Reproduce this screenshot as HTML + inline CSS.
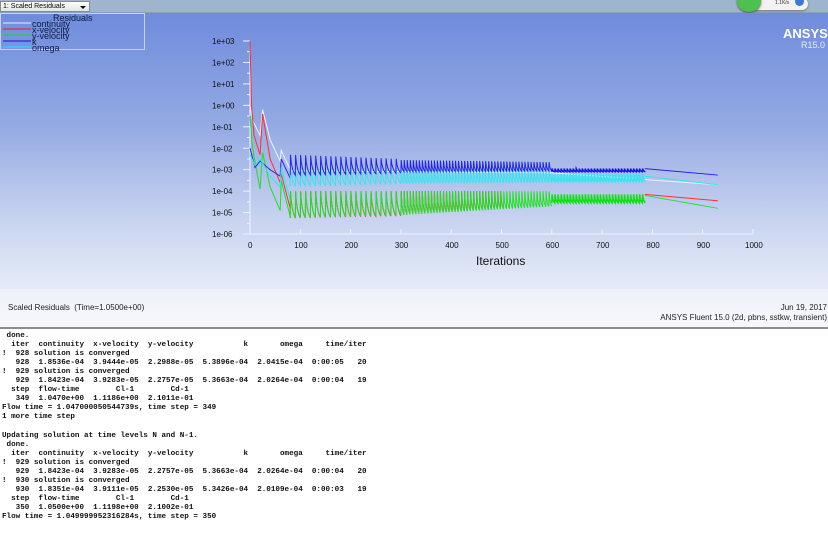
<!DOCTYPE html>
<html><head><meta charset="utf-8"><style>
*{margin:0;padding:0;box-sizing:border-box}
body{width:828px;height:535px;overflow:hidden;background:#fff;font-family:"Liberation Sans",sans-serif;position:relative}
#top{position:absolute;left:0;top:0;width:828px;height:13px;background:#9fb5cd;border-bottom:1px solid #8aa0bb}
#dd{position:absolute;left:0;top:1px;width:90px;height:11px;background:linear-gradient(#fdfdfd,#e4e4e4);border:1px solid #8a8a8a;font-size:7px;line-height:9px;padding-left:2px;color:#000}
#dd:after{content:"";position:absolute;right:3px;top:4px;border:3px solid transparent;border-top:3px solid #000}
#plot{position:absolute;left:0;top:13px;width:828px;height:276px;background:linear-gradient(#6f8cdc 0%,#93a9e3 40%,#c8d3f0 75%,#e6ebf8 100%)}
#foot{position:absolute;left:0;top:289px;width:828px;height:38px;background:linear-gradient(#eef1fa,#f6f8fc)}
#sep{position:absolute;left:0;top:327px;width:828px;height:2px;background:#8c8c8c}
#con{position:absolute;left:2px;top:331.5px;font-family:"Liberation Mono",monospace;font-weight:bold;font-size:7.6px;line-height:9.1px;white-space:pre;color:#111}
.ft{position:absolute;font-size:8px;color:#222}
</style></head><body>
<div id="top"><div id="dd">1: Scaled Residuals</div>
<div style="position:absolute;left:742px;top:-2px;width:66px;height:12px;background:#f2f2f2;border-radius:6px;box-shadow:0 1px 2px #777"></div>
<div style="position:absolute;left:737px;top:-10px;width:24px;height:22px;border-radius:50%;background:#4cc152;box-shadow:0 1px 2px #555"></div>
<div style="position:absolute;left:775px;top:0;font-size:5px;color:#333">1.1K/s</div>
<div style="position:absolute;left:795px;top:-3px;width:9px;height:9px;border-radius:50%;background:#3c78d8"></div>
</div>
<div id="plot"></div>
<svg id="svg" width="828" height="289" style="position:absolute;left:0;top:0" font-family="Liberation Sans, sans-serif">
<rect x="0.5" y="13.5" width="144" height="36" fill="none" stroke="#c8d2ee"/>
<text x="53" y="21" font-size="9" fill="#0c1a40">Residuals</text>
<g font-size="9" fill="#0c1a40">
<line x1="3" x2="31" y1="23" y2="23" stroke="#e8eef8"/><text x="32" y="27">continuity</text>
<line x1="3" x2="31" y1="29" y2="29" stroke="#e02020"/><text x="32" y="33">x-velocity</text>
<line x1="3" x2="31" y1="35" y2="35" stroke="#20d020"/><text x="32" y="39">y-velocity</text>
<line x1="3" x2="31" y1="41" y2="41" stroke="#1010e0"/><text x="32" y="45">k</text>
<line x1="3" x2="31" y1="47" y2="47" stroke="#20e0f0"/><text x="32" y="51">omega</text>
</g>
<text x="783" y="38" font-size="13" font-weight="bold" fill="#fff">ANSYS</text>
<text x="801" y="48" font-size="9" fill="#e8eefa">R15.0</text>
<g id="axes" stroke="#eef2ff" fill="none"></g>
<g id="lbl" font-size="8" fill="#111"></g>
<g id="curves" fill="none" stroke-width="1"></g>
<text x="476" y="265" font-size="12" fill="#111">Iterations</text>
</svg>
<div id="foot"></div>
<div class="ft" style="left:8px;top:303px">Scaled Residuals&nbsp; (Time=1.0500e+00)</div>
<div class="ft" style="right:1px;top:303px">Jun 19, 2017</div>
<div class="ft" style="right:1px;top:313px">ANSYS Fluent 15.0 (2d, pbns, sstkw, transient)</div>
<div id="sep"></div>
<div id="con"> done.
  iter  continuity  x-velocity  y-velocity           k       omega     time/iter
!  928 solution is converged
   928  1.8536e-04  3.9444e-05  2.2988e-05  5.3896e-04  2.0415e-04  0:00:05   20
!  929 solution is converged
   929  1.8423e-04  3.9283e-05  2.2757e-05  5.3663e-04  2.0264e-04  0:00:04   19
  step  flow-time        Cl-1        Cd-1
   349  1.0470e+00  1.1186e+00  2.1011e-01
Flow time = 1.047000050544739s, time step = 349
1 more time step

Updating solution at time levels N and N-1.
 done.
  iter  continuity  x-velocity  y-velocity           k       omega     time/iter
!  929 solution is converged
   929  1.8423e-04  3.9283e-05  2.2757e-05  5.3663e-04  2.0264e-04  0:00:04   20
!  930 solution is converged
   930  1.8351e-04  3.9111e-05  2.2530e-05  5.3426e-04  2.0109e-04  0:00:03   19
  step  flow-time        Cl-1        Cd-1
   350  1.0500e+00  1.1198e+00  2.1002e-01
Flow time = 1.049999952316284s, time step = 350</div>
<script>
var NS="http://www.w3.org/2000/svg";
function X(i){return 250+i*0.503}
function Y(v){return 41+(3-v)*21.45}
function el(p,t,a,txt){var e=document.createElementNS(NS,t);for(var k in a)e.setAttribute(k,a[k]);if(txt)e.textContent=txt;p.appendChild(e);return e}
var ax=document.getElementById('axes'),lb=document.getElementById('lbl'),cv=document.getElementById('curves');
el(ax,'line',{x1:250,x2:250,y1:41,y2:234});
el(ax,'line',{x1:250,x2:753,y1:234,y2:234});
for(var d=3;d>=-6;d--){var y=Y(d);el(ax,'line',{x1:243,x2:250,y1:y,y2:y});
 if(d>-6){var yy=Y(d-0.5);el(ax,'line',{x1:247,x2:250,y1:yy,y2:yy})}
 var s=(d>=0?'1e+0'+d:'1e-0'+(-d));el(lb,'text',{x:212,y:y+3},s);}
for(var i=0;i<=1000;i+=100){el(ax,'line',{x1:X(i),x2:X(i),y1:234,y2:229});el(lb,'text',{x:X(i)-(i==0?2:i<1000?6:8),y:248},''+i);}
function saw(hi,lo,start,end,per,fadeHi,fadeLo){var pts=[];for(var s=start;s<end;s+=per){var t=(s-start)/(end-start);var h=hi+(fadeHi||0)*t,l=lo+(fadeLo||0)*t;pts.push(X(s).toFixed(1)+','+Y(l).toFixed(1));pts.push(X(s+0.6).toFixed(1)+','+Y(h).toFixed(1));for(var k=2;k<=per;k+=2){var v=h+(l-h)*(1-Math.exp(-k/(per*0.5)))/(1-Math.exp(-2));pts.push(X(s+k).toFixed(1)+','+Y(v).toFixed(1))}}return pts}
function line(pts,c,w){el(cv,'polyline',{points:pts.join(' '),stroke:c,'stroke-width':w||1})}
function P(a){return a.map(function(p){return X(p[0])+','+Y(p[1])})}
function lin(a,b){return P([a,b])}
line(P([[0,0],[5,-0.7],[20,-1.4],[25,-0.2],[40,-1.6],[60,-2.6],[62,-2.1],[80,-3]]),'#eef2ff');
line(P([[0,3],[3,0],[8,-1.4],[20,-2.3],[25,-0.4],[40,-2.5],[60,-3.6],[62,-3.2],[80,-4.8]]),'#ff3030');
line(P([[0,-0.5],[5,-2],[20,-3.9],[25,-2.2],[40,-3.8],[60,-4.9],[62,-3.5],[80,-5.2]]),'#20e020');
line(P([[0,-2],[10,-2.9],[20,-2.6],[40,-3],[60,-3.3],[62,-2.5],[80,-3.4]]),'#2a2ae8');
line(P([[0,-2.3],[10,-2.8],[20,-2.5],[40,-3.3],[60,-3.8],[62,-2.9],[80,-4.4]]),'#30e8f0');
line(lin([80,-3.05],[600,-3.15]),'#eef2ff');line(lin([600,-3.15],[930,-3.7]),'#eef2ff');
// cyan
line(saw(-2.9,-3.75,80,300,10,0,0.1),'#30e8f0');
line(saw(-2.95,-3.65,300,600,6,0,0.05),'#30e8f0');
line(saw(-3.2,-3.55,600,785,6,0,0),'#30e8f0',1.5);
// blue
line(saw(-2.3,-3.25,80,300,10,-0.2,0.1),'#2222e8');
line(saw(-2.55,-3.1,300,600,6,-0.1,0.05),'#2222e8');
line(saw(-2.95,-3.1,600,785,6,0,0),'#1515e0',1.5);
// red/green
line(saw(-4,-5.25,80,300,10,0,0.1),'#ff3030');
line(saw(-4,-5.1,300,500,6,0,0.3),'#ff3030');
line(saw(-4,-5.25,80,300,10,0,0.15),'#22e022');
line(saw(-4,-5.1,300,600,6,0,0.4),'#22e022');
line(saw(-4.15,-4.55,600,785,6,0,0),'#10e010',1.5);
line(lin([785,-2.95],[930,-3.25]),'#2020e8');
line(lin([785,-3.3],[930,-3.7]),'#30e8f0');
line(lin([785,-4.15],[930,-4.45]),'#ff3030');
line(lin([785,-4.2],[930,-4.8]),'#22e022');
</script>
</body></html>
